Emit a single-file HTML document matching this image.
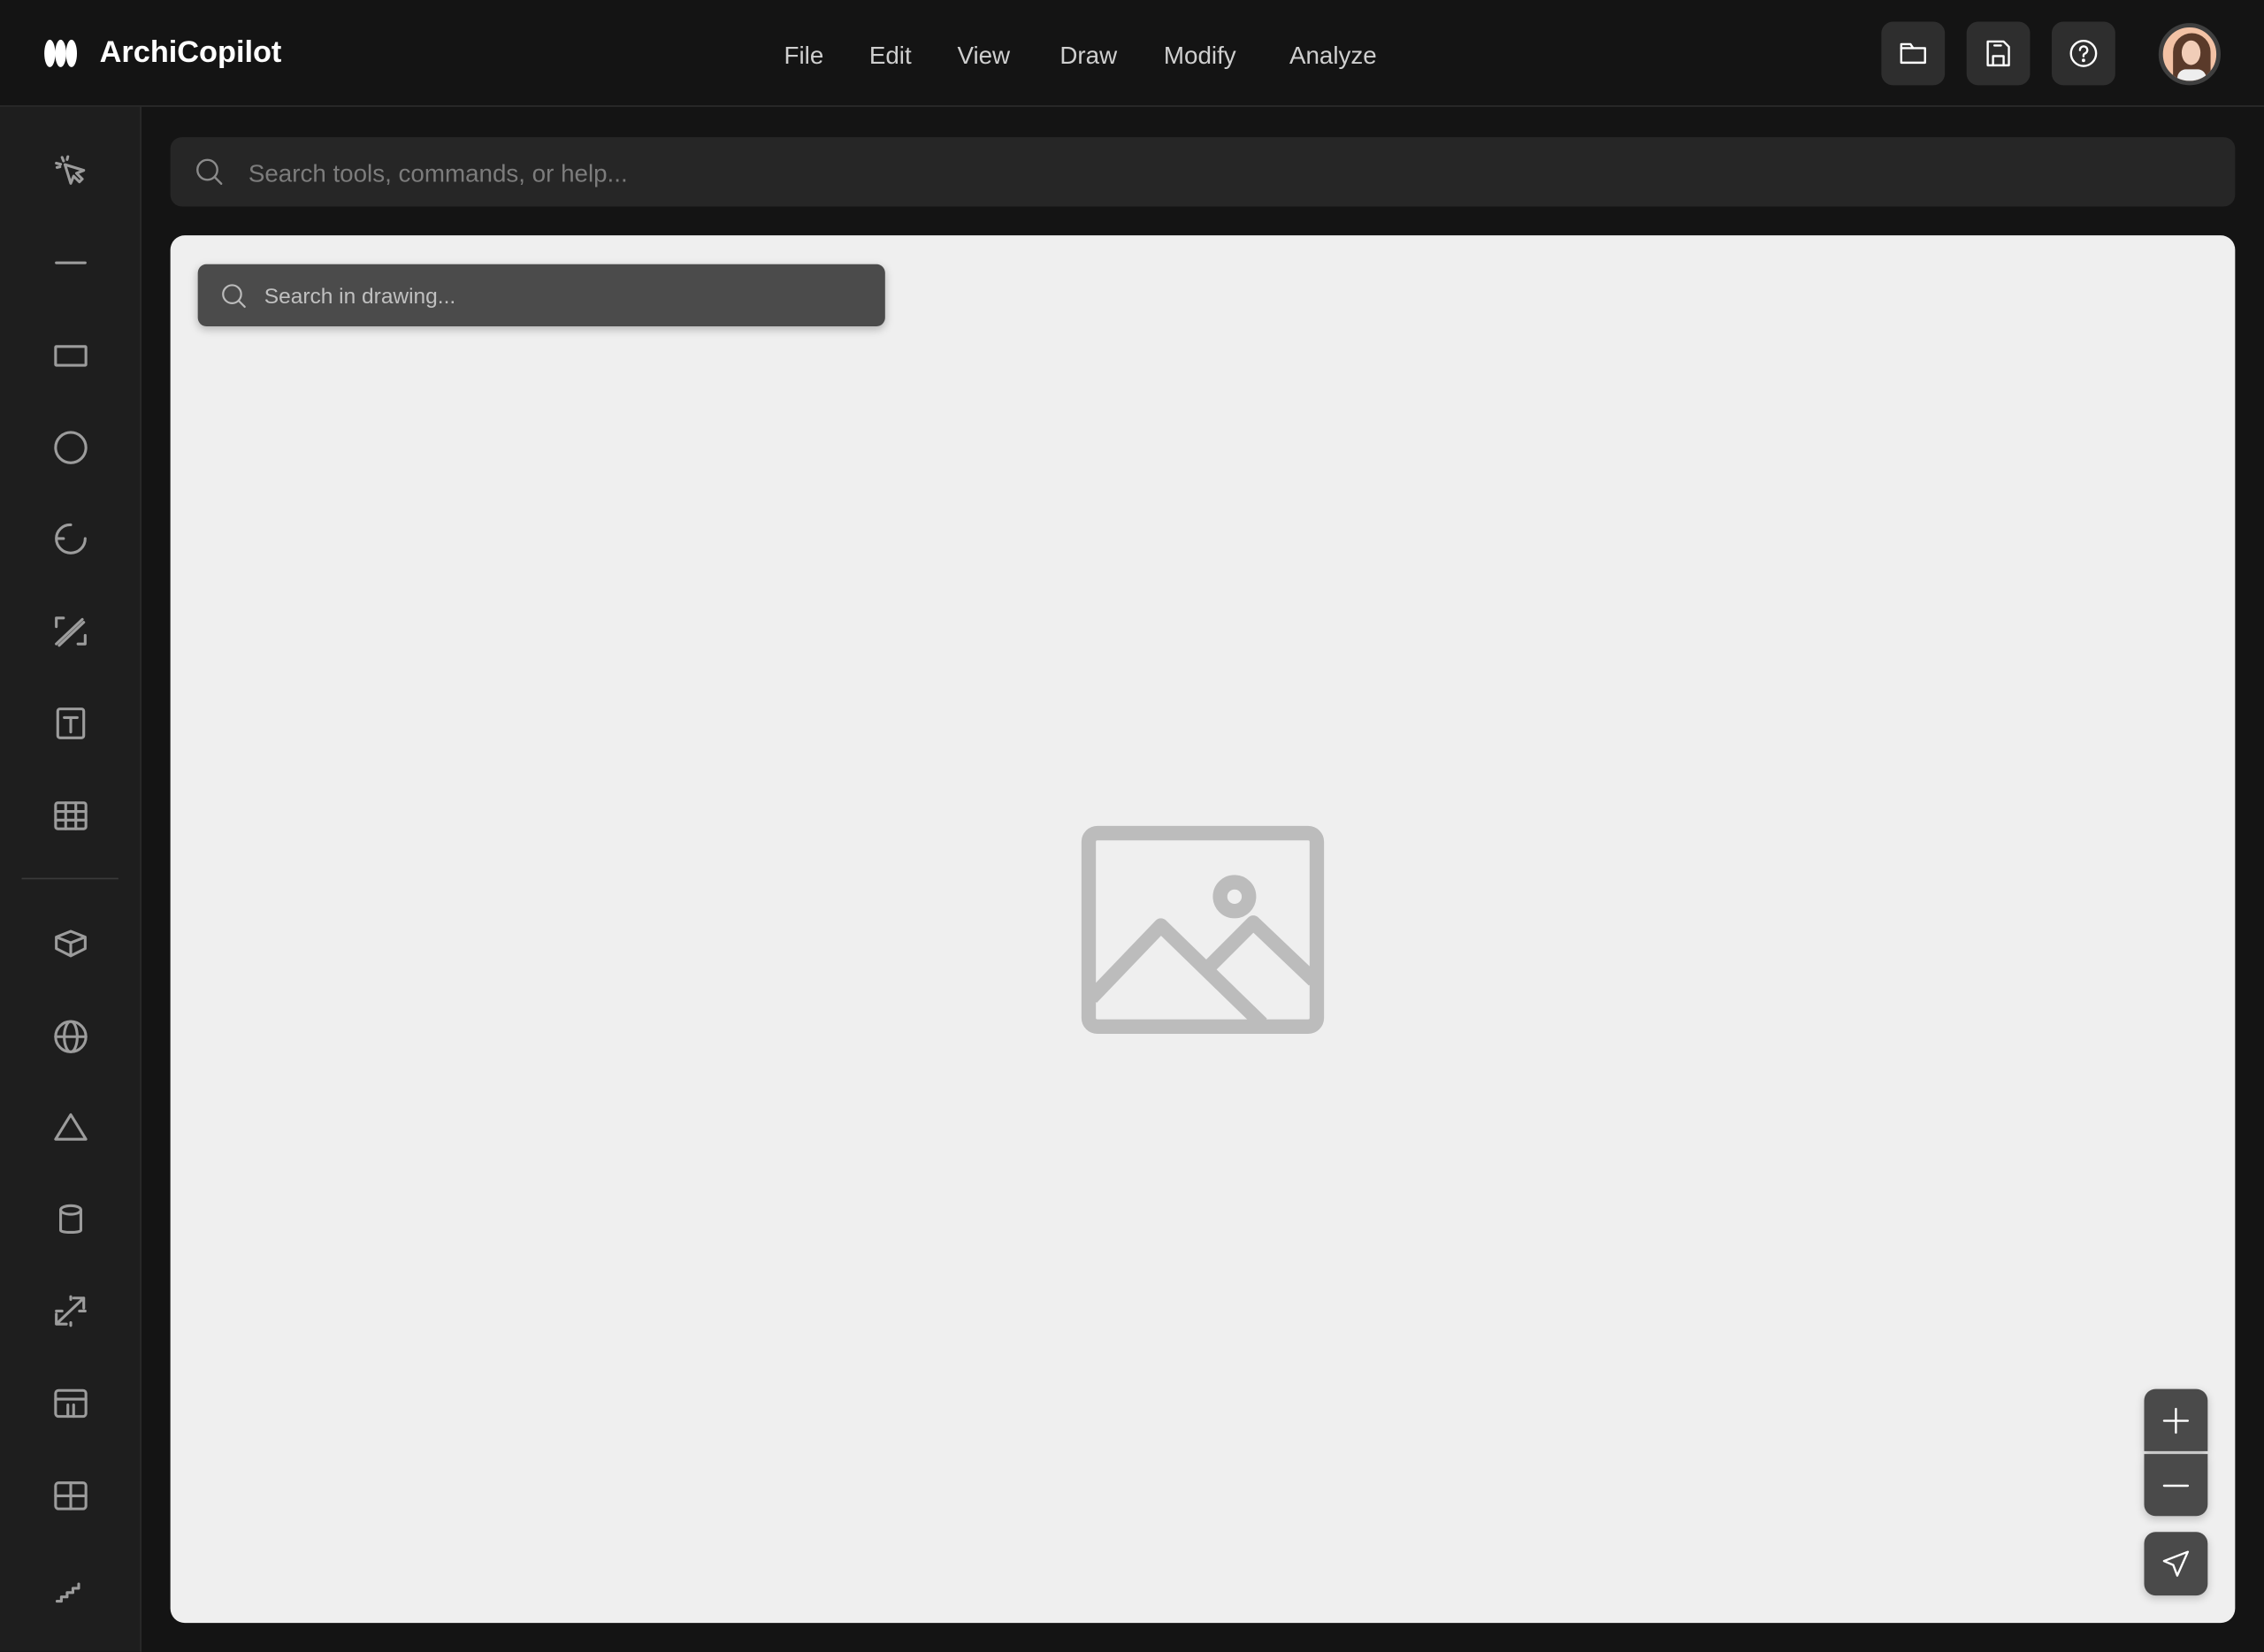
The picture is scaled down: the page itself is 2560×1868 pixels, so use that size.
<!DOCTYPE html>
<html><head><meta charset="utf-8"><style>
*{box-sizing:border-box;margin:0;padding:0}
html,body{width:2560px;height:1868px;overflow:hidden;background:#141414}
#w{width:1568px;height:1144px;transform:scale(1.63265);transform-origin:0 0;position:relative;font-family:"Liberation Sans",sans-serif;background:#141414}
.hdr{position:absolute;left:0;top:0;width:1568px;height:74px;background:#141414;border-bottom:1px solid #2c2c2c}
.side{position:absolute;left:0;top:74px;width:98px;height:1070px;background:#1e1e1e;border-right:1px solid #2a2a2a}
.ic{position:absolute;left:37px;width:24px;height:24px}
.ic svg{width:24px;height:24px;fill:none;stroke:#9c9c9c;stroke-width:1.9;stroke-linecap:round;stroke-linejoin:round}
.menu{position:absolute;top:29px;font-size:17px;color:#cfcfcf}
.btn{position:absolute;top:15px;width:44px;height:44px;background:#2e2e2e;border-radius:8px}
.btn svg{position:absolute;left:11px;top:11px;width:22px;height:22px;fill:none;stroke:#fff;stroke-width:1.6;stroke-linecap:round;stroke-linejoin:round}
.zb{position:absolute;left:1367px;width:44px;background:#4a4a4a;box-shadow:0 2px 6px rgba(0,0,0,.2)}
.zb svg{position:absolute;left:11px;width:22px;height:22px;fill:none;stroke:#fff;stroke-width:1.6;stroke-linecap:round;stroke-linejoin:round}
</style></head><body><div id="w">
<div class="hdr">
 <svg style="position:absolute;left:30px;top:27px" width="24" height="20" viewBox="0 0 24 20"><ellipse cx="4.5" cy="10" rx="3.8" ry="9.5" fill="#fff"/><ellipse cx="12" cy="10" rx="3.8" ry="9.5" fill="#fff"/><ellipse cx="19.5" cy="10" rx="3.8" ry="9.5" fill="#fff"/></svg>
 <div style="position:absolute;left:69px;top:25px;font-size:21px;font-weight:bold;color:#fff">ArchiCopilot</div>
 <div class="menu" style="left:543px">File</div>
 <div class="menu" style="left:602px">Edit</div>
 <div class="menu" style="left:663px">View</div>
 <div class="menu" style="left:734px">Draw</div>
 <div class="menu" style="left:806px">Modify</div>
 <div class="menu" style="left:893px">Analyze</div>
 <div class="btn" style="left:1303px"><svg viewBox="0 0 24 24"><path d="M3 6v13h18V8h-9l-2-3H3z"/><path d="M3 8h9"/></svg></div>
 <div class="btn" style="left:1362px"><svg viewBox="0 0 24 24"><path d="M4 3h12l4 4v14H4z"/><path d="M8 21v-7h8v7M9 6h5"/></svg></div>
 <div class="btn" style="left:1421px"><svg viewBox="0 0 24 24"><circle cx="12" cy="12" r="9.5"/><path d="M9.3 9.5a2.8 2.8 0 1 1 3.7 2.6c-.7.3-1 .8-1 1.5v.6"/><circle cx="12" cy="17.2" r=".5" fill="#fff"/></svg></div>
 <div style="position:absolute;left:1495px;top:16px;width:43px;height:43px;border-radius:50%;background:#f3c2a5;border:3px solid #3f3f3f;overflow:hidden">
  <div style="position:absolute;left:7px;top:4px;width:26px;height:40px;border-radius:13px 13px 4px 4px;background:#5a3a2a"></div>
  <div style="position:absolute;left:13px;top:9px;width:13px;height:17px;border-radius:50%;background:#f1cdb8"></div>
  <div style="position:absolute;left:10px;top:29px;width:20px;height:14px;background:#eee;border-radius:6px 6px 0 0"></div>
 </div>
</div>
<div class="side">
 <div class="ic" style="top:32px"><svg viewBox="0 0 24 24"><path d="M8 8l13 4-5 2 4 4-2 2-4-4-2 5z"/><path d="M6 3l1 2.5M2 7l3 .8M2.5 10l2-.5M10 2.5l-.5 2"/></svg></div>
 <div class="ic" style="top:96px"><svg viewBox="0 0 24 24"><path d="M2 12h20"/></svg></div>
 <div class="ic" style="top:160px"><svg viewBox="0 0 24 24"><rect x="1.5" y="6" width="21" height="13" rx=".5"/></svg></div>
 <div class="ic" style="top:224px"><svg viewBox="0 0 24 24"><circle cx="12" cy="12" r="10.5"/></svg></div>
 <div class="ic" style="top:287px"><svg viewBox="0 0 24 24"><path d="M12 2.5a9.5 9.5 0 0 0-10 9.5M2 12a10 10 0 0 0 20 0M2 12h5"/></svg></div>
 <div class="ic" style="top:351px"><svg viewBox="0 0 24 24"><path d="M2 9V3h5M22 15v6h-5M2 21L20 4M4 22L21 6"/></svg></div>
 <div class="ic" style="top:415px"><svg viewBox="0 0 24 24"><rect x="3" y="2" width="18" height="20" rx="1.5"/><path d="M7.5 8h9M12 8v10"/></svg></div>
 <div class="ic" style="top:479px"><svg viewBox="0 0 24 24"><rect x="1.5" y="3" width="21" height="18" rx="1.5"/><path d="M1.5 9h21M1.5 15h21M8.5 3v18M15.5 3v18"/></svg></div>
 <div style="position:absolute;left:15px;top:534px;width:67px;height:1px;background:#3a3a3a"></div>
 <div class="ic" style="top:568px"><svg viewBox="0 0 24 24"><path d="M12 3l10 4v8l-10 5-10-5V7zM2 7l10 4 10-4M12 11v9"/></svg></div>
 <div class="ic" style="top:632px"><svg viewBox="0 0 24 24"><circle cx="12" cy="12" r="10.5"/><ellipse cx="12" cy="12" rx="4.5" ry="10.5"/><path d="M1.5 12h21"/></svg></div>
 <div class="ic" style="top:695px"><svg viewBox="0 0 24 24"><path d="M12 3L1.5 20h21z"/></svg></div>
 <div class="ic" style="top:759px"><svg viewBox="0 0 24 24"><ellipse cx="12" cy="5" rx="7" ry="3"/><path d="M5 5v14c0 2 14 2 14 0V5"/></svg></div>
 <div class="ic" style="top:822px"><svg viewBox="0 0 24 24"><path d="M2 21L21 3M14 3h7v7M2 14v7h7M12 2v2M2 12h4M18 12h4M12 20v2"/></svg></div>
 <div class="ic" style="top:886px"><svg viewBox="0 0 24 24"><rect x="1.5" y="3" width="21" height="18" rx="2"/><path d="M1.5 9h21M10 13v8M14 13v8"/></svg></div>
 <div class="ic" style="top:950px"><svg viewBox="0 0 24 24"><rect x="1.5" y="3" width="21" height="18" rx="2"/><path d="M1.5 12h21M12 3v18"/></svg></div>
 <div class="ic" style="top:1014px"><svg viewBox="0 0 24 24"><path d="M2.5 21h3v-3h4v-3h4v-3h4V9"/></svg></div>
</div>
<div style="position:absolute;left:118px;top:95px;width:1430px;height:48px;background:#262626;border-radius:8px">
 <svg style="position:absolute;left:16px;top:13px" width="22" height="22" viewBox="0 0 24 24" fill="none" stroke="#8a8a8a" stroke-width="1.6" stroke-linecap="round"><circle cx="10.5" cy="10.5" r="7.5"/><path d="M16 16l5 5"/></svg>
 <div style="position:absolute;left:54px;top:16px;font-size:17px;color:#7c7c7c">Search tools, commands, or help...</div>
</div>
<div style="position:absolute;left:118px;top:163px;width:1430px;height:961px;background:#efefef;border-radius:10px;overflow:hidden">
 <div style="position:absolute;left:19px;top:20px;width:476px;height:43px;background:#4b4b4b;border-radius:6px;box-shadow:0 2px 6px rgba(0,0,0,.25)">
  <svg style="position:absolute;left:15px;top:12px" width="20" height="20" viewBox="0 0 24 24" fill="none" stroke="#bbb" stroke-width="1.6" stroke-linecap="round"><circle cx="10.5" cy="10.5" r="7.5"/><path d="M16 16l5 5"/></svg>
  <div style="position:absolute;left:46px;top:14px;font-size:15px;color:#c0c0c0">Search in drawing...</div>
 </div>
 <svg style="position:absolute;left:630px;top:408px" width="170" height="146" viewBox="0 0 170 146" fill="none" stroke="#bcbcbc" stroke-width="10" stroke-linejoin="round"><rect x="6" y="6" width="158" height="134" rx="6"/><circle cx="107" cy="50" r="10"/><path d="M8 120l48-50 70 68M90 98l30-30 42 40"/></svg>
 <div class="zb" style="top:799px;height:43px;border-radius:8px 8px 0 0"><svg style="top:11px" viewBox="0 0 24 24"><path d="M12 3v18M3 12h18"/></svg></div>
 <div class="zb" style="top:844px;height:43px;border-radius:0 0 8px 8px"><svg style="top:11px" viewBox="0 0 24 24"><path d="M3 12h18"/></svg></div>
 <div class="zb" style="top:898px;height:44px;border-radius:8px"><svg style="top:11px" viewBox="0 0 24 24"><path d="M21 3L3 10l7 3 3 8z"/></svg></div>
</div>
</div></body></html>
